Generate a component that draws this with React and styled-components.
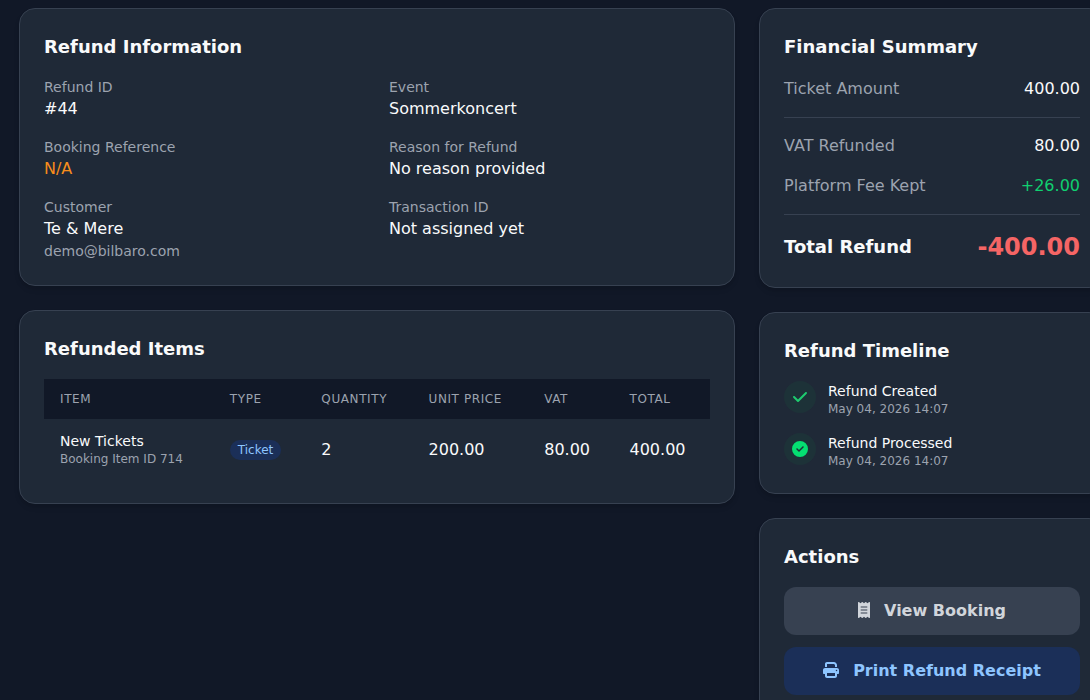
import React from "react";
import styled, { createGlobalStyle } from "styled-components";
import { FaCheck, FaCircleCheck, FaPrint, FaReceipt } from "react-icons/fa6";

const GlobalStyle = createGlobalStyle`
  html, body {
    margin: 0;
    height: 700px;
    overflow: hidden;
    background: #111827;
    color: #f9fafb;
    font-family: "DejaVu Sans", sans-serif;
  }
`;

const Page = styled.div`
  display: grid;
  grid-template-columns: 716px 346px;
  gap: 24px;
  align-items: start;
  padding: 8px 0 0 19px;
  width: 1200px;
`;

const Column = styled.div`
  display: flex;
  flex-direction: column;
  gap: 24px;
`;

const Card = styled.section`
  background: #1f2937;
  border: 1px solid #374151;
  border-radius: 16px;
  padding: 24px;
  box-sizing: border-box;
  box-shadow: 0 4px 6px -1px rgba(0, 0, 0, 0.1), 0 2px 4px -2px rgba(0, 0, 0, 0.1);
`;

const CardTitle = styled.h2`
  margin: 0 0 ${(p) => p.$gap || 16}px;
  font-size: 18px;
  line-height: 28px;
  font-weight: 700;
  color: #f9fafb;
`;

const InfoGrid = styled.div`
  display: grid;
  grid-template-columns: 1fr 1fr;
  column-gap: 24px;
`;

const InfoColumn = styled.div`
  display: flex;
  flex-direction: column;
  gap: 16px;
`;

const Label = styled.div`
  font-size: 14px;
  line-height: 20px;
  color: #9ca3af;
`;

const Value = styled.div`
  font-size: 16px;
  line-height: 24px;
  color: ${(p) => p.$color || "#f9fafb"};
`;

const Table = styled.table`
  width: 100%;
  border-collapse: collapse;
`;

const Th = styled.th`
  background: #111827;
  padding: 12px 16px;
  text-align: left;
  font-size: 12px;
  line-height: 16px;
  font-weight: 500;
  letter-spacing: 0.6px;
  text-transform: uppercase;
  color: #9ca3af;
`;

const Td = styled.td`
  padding: 14px 16px 12px;
  font-size: 16px;
  line-height: 24px;
  color: #f9fafb;
`;

const ItemCell = styled(Td)`
  padding: 12px 16px;
`;

const ItemName = styled.div`
  font-size: 14px;
  line-height: 20px;
`;

const ItemSub = styled.div`
  font-size: 12px;
  line-height: 16px;
  color: #9ca3af;
`;

const Badge = styled.span`
  display: inline-block;
  padding: 2px 8px;
  border-radius: 999px;
  background: #1b2f58;
  color: #8ec5ff;
  font-size: 12px;
  line-height: 16px;
`;

const SummaryRow = styled.div`
  display: flex;
  justify-content: space-between;
  align-items: center;
  font-size: 16px;
  line-height: 24px;
  padding: ${(p) => (p.$divided ? "16px 0 8px" : "8px 0")};
  border-top: ${(p) => (p.$divided ? "1px solid #374151" : "none")};
  margin-bottom: ${(p) => (p.$spaced ? 8 : 0)}px;
`;

const TotalRow = styled(SummaryRow)`
  padding: 16px 0 0;
  margin: 0;
`;

const SummaryLabel = styled.span`
  color: #9ca3af;
`;

const SummaryValue = styled.span`
  font-size: 16px;
  color: ${(p) => p.$color || "#f9fafb"};
`;

const TotalLabel = styled.span`
  font-size: 18px;
  line-height: 28px;
  font-weight: 700;
`;

const TotalValue = styled.span`
  font-size: 24px;
  line-height: 32px;
  font-weight: 700;
  color: #f56565;
`;

const Timeline = styled.div`
  display: flex;
  flex-direction: column;
  gap: 16px;
`;

const TimelineRow = styled.div`
  display: flex;
  align-items: flex-start;
  gap: 12px;
`;

const TimelineDot = styled.div`
  width: 32px;
  height: 32px;
  border-radius: 50%;
  background: rgba(0, 201, 80, 0.06);
  color: ${(p) => (p.$done ? "#05df72" : "#1ecb6f")};
  display: flex;
  align-items: center;
  justify-content: center;
  font-size: 16px;
  flex-shrink: 0;
`;

const EventName = styled.div`
  font-size: 14px;
  line-height: 20px;
  color: #f9fafb;
`;

const EventDate = styled.div`
  font-size: 12px;
  line-height: 16px;
  color: #9ca3af;
`;

const Actions = styled.div`
  display: flex;
  flex-direction: column;
  gap: 12px;
`;

const ActionButton = styled.button`
  display: flex;
  align-items: center;
  justify-content: center;
  gap: 14px;
  height: 48px;
  padding: 0 0 2px;
  border: none;
  border-radius: 12px;
  font-family: inherit;
  font-size: 16px;
  font-weight: 700;
  background: ${(p) => (p.$primary ? "#1b2f58" : "#374151")};
  color: ${(p) => (p.$primary ? "#8ec5ff" : "#d1d5db")};
`;

const ReceiptIcon = styled(FaReceipt)`
  && {
    width: 12px;
  }
`;

const info = {
  left: [
    ["Refund ID", "#44"],
    ["Booking Reference", "N/A", "#f78d1c"],
  ],
  right: [
    ["Event", "Sommerkoncert"],
    ["Reason for Refund", "No reason provided"],
    ["Transaction ID", "Not assigned yet"],
  ],
};

const columns = ["Item", "Type", "Quantity", "Unit Price", "VAT", "Total"];

const events = [
  { name: "Refund Created", icon: <FaCheck /> },
  { name: "Refund Processed", icon: <FaCircleCheck />, done: true },
];

export default function App() {
  return (
    <>
      <GlobalStyle />
      <Page>
        <Column>
          <Card>
            <CardTitle>Refund Information</CardTitle>
            <InfoGrid>
              <InfoColumn>
                {info.left.map(([label, value, color]) => (
                  <div key={label}>
                    <Label>{label}</Label>
                    <Value $color={color}>{value}</Value>
                  </div>
                ))}
                <div>
                  <Label>Customer</Label>
                  <Value>Te &amp; Mere</Value>
                  <Label>demo@bilbaro.com</Label>
                </div>
              </InfoColumn>
              <InfoColumn>
                {info.right.map(([label, value]) => (
                  <div key={label}>
                    <Label>{label}</Label>
                    <Value>{value}</Value>
                  </div>
                ))}
              </InfoColumn>
            </InfoGrid>
          </Card>
          <Card>
            <CardTitle>Refunded Items</CardTitle>
            <Table>
              <thead>
                <tr>
                  {columns.map((c) => (
                    <Th key={c}>{c}</Th>
                  ))}
                </tr>
              </thead>
              <tbody>
                <tr>
                  <ItemCell>
                    <ItemName>New Tickets</ItemName>
                    <ItemSub>Booking Item ID 714</ItemSub>
                  </ItemCell>
                  <ItemCell>
                    <Badge>Ticket</Badge>
                  </ItemCell>
                  <Td>2</Td>
                  <Td>200.00</Td>
                  <Td>80.00</Td>
                  <Td>400.00</Td>
                </tr>
              </tbody>
            </Table>
          </Card>
        </Column>
        <Column>
          <Card>
            <CardTitle $gap={8}>Financial Summary</CardTitle>
            <SummaryRow $spaced>
              <SummaryLabel>Ticket Amount</SummaryLabel>
              <SummaryValue>400.00</SummaryValue>
            </SummaryRow>
            <SummaryRow $divided>
              <SummaryLabel>VAT Refunded</SummaryLabel>
              <SummaryValue>80.00</SummaryValue>
            </SummaryRow>
            <SummaryRow $spaced>
              <SummaryLabel>Platform Fee Kept</SummaryLabel>
              <SummaryValue $color="#10d070">+26.00</SummaryValue>
            </SummaryRow>
            <TotalRow $divided>
              <TotalLabel>Total Refund</TotalLabel>
              <TotalValue>-400.00</TotalValue>
            </TotalRow>
          </Card>
          <Card>
            <CardTitle>Refund Timeline</CardTitle>
            <Timeline>
              {events.map((e) => (
                <TimelineRow key={e.name}>
                  <TimelineDot $done={e.done}>{e.icon}</TimelineDot>
                  <div>
                    <EventName>{e.name}</EventName>
                    <EventDate>May 04, 2026 14:07</EventDate>
                  </div>
                </TimelineRow>
              ))}
            </Timeline>
          </Card>
          <Card>
            <CardTitle>Actions</CardTitle>
            <Actions>
              <ActionButton>
                <ReceiptIcon />
                View Booking
              </ActionButton>
              <ActionButton $primary>
                <FaPrint />
                Print Refund Receipt
              </ActionButton>
            </Actions>
          </Card>
        </Column>
      </Page>
    </>
  );
}
